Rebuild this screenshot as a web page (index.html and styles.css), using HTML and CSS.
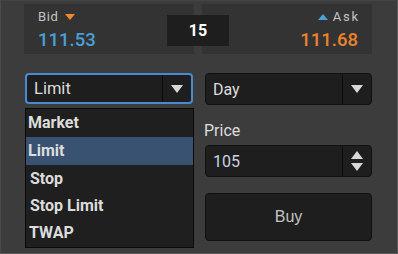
FILE: index.html
```html
<!DOCTYPE html>
<html>
<head>
<meta charset="utf-8">
<link rel="stylesheet" href="styles.css">
</head>
<body>
<div class="panel">
  <div class="quotes">
    <div class="quote bid">
      <div class="label">Bid <span class="tri-down"></span></div>
      <div class="price">111.53</div>
    </div>
    <div class="quote ask">
      <div class="label"><span class="tri-up"></span> Ask</div>
      <div class="price">111.68</div>
    </div>
    <div class="qty">15</div>
  </div>
  <div class="form">
    <div class="col-left">
      <div class="select focused">
        <span class="val">Limit</span>
        <span class="arrow"><span class="caret"></span></span>
      </div>
      <ul class="list">
        <li>Market</li>
        <li class="sel">Limit</li>
        <li>Stop</li>
        <li>Stop Limit</li>
        <li>TWAP</li>
      </ul>
    </div>
    <div class="col-right">
      <div class="select">
        <span class="val">Day</span>
        <span class="arrow"><span class="caret"></span></span>
      </div>
      <div class="plabel">Price</div>
      <div class="select">
        <span class="val num">105</span>
        <span class="arrow spin"><span class="caret-up"></span><span class="caret"></span></span>
      </div>
      <button class="buy">Buy</button>
    </div>
  </div>
</div>
</body>
</html>
```
FILE: styles.css
```css
* { box-sizing: border-box; }
html, body { margin: 0; padding: 0; }
body {
  width: 398px; height: 254px; overflow: hidden;
  background: #3c3c3c;
  font-family: Roboto, "Noto Sans", "Liberation Sans", sans-serif;
}
.panel {
  width: 398px; height: 254px;
  border: 1px solid #5a5a5a;
  border-left-color: #4a4a4a;
  border-top-color: #444;
  padding: 3px 0 0 23px;
}
.quotes {
  position: relative;
  display: flex;
  gap: 8px;
  height: 51px;
}
.quote {
  width: 170px; height: 50px;
  background: #333333;
  padding: 5px 14px 0 14px;
}
.quote .label {
  font-size: 13px; color: #c4c4c4; height: 16px; line-height: 16px;
  display: flex; align-items: center; gap: 7px; letter-spacing: 0.6px;
}
.ask .label { justify-content: flex-end; letter-spacing: 1.8px; gap: 5px; margin-right: -2px; }
.quote .price {
  font-size: 18.5px; line-height: 22px; margin-top: 4px; font-weight: 500;
}
.bid .price { color: #4aa0d8; }
.ask { text-align: right; }
.ask .price { color: #ec832c; }
.tri-down {
  width: 0; height: 0;
  border-left: 5px solid transparent; border-right: 5px solid transparent;
  border-top: 6px solid #f0882c;
}
.tri-up {
  width: 0; height: 0;
  border-left: 5px solid transparent; border-right: 5px solid transparent;
  border-bottom: 6px solid #4aa0d8;
}
.qty {
  position: absolute; left: 143px; top: 11px;
  width: 62px; height: 31px;
  background: #1e1e1e;
  color: #fff; font-weight: 700; font-size: 16px;
  display: flex; align-items: center; justify-content: center;
}
.form {
  display: flex; gap: 12px; margin-top: 18px; padding-left: 1px;
}
.col-left { width: 168px; }
.col-right { width: 167px; display: flex; flex-direction: column; }
.select {
  height: 32px;
  background: #1e1e1e;
  border: 1px solid #111;
  border-radius: 4px;
  display: flex; align-items: stretch;
  color: #dcdcdc; font-size: 16px;
}
.select.focused { border: 2px solid #4a8ad4; height: 31px; border-radius: 4px; }
.select .val { flex: 1; display: flex; align-items: center; padding-left: 7px; }
.select.focused .val { padding-left: 7px; font-size: 16.5px; }
.select .num { color: #c8d4e0; font-size: 16px; }
.select .arrow {
  width: 29px; border-left: 1px solid #0c0c0c;
  display: flex; align-items: center; justify-content: center; flex-direction: column; gap: 4px;
}
.caret {
  width: 0; height: 0;
  border-left: 6px solid transparent; border-right: 6px solid transparent;
  border-top: 8px solid #d8d8d8;
}
.caret-up {
  width: 0; height: 0;
  border-left: 6px solid transparent; border-right: 6px solid transparent;
  border-bottom: 8px solid #d8d8d8;
}
.list {
  list-style: none; margin: 4px 0 0 0; padding: 0;
  width: 169px;
  background: #1f1f1f;
  border: 1px solid #0a0a0a;
  height: 140px;
}
.list li {
  height: 27px; line-height: 27px;
  padding-left: 3px;
  color: #dcdcdc; font-size: 16px; font-weight: 700;
}
.list li:first-child { height: 28px; padding-left: 2px; }
.list li.sel { background: #3a5272; padding-left: 2px; height: 28px; }
.list li:nth-child(3), .list li:nth-child(4) { padding-left: 4px; }
.plabel {
  color: #dcdcdc; font-size: 16px; margin: 15px 0 4px -1px; height: 21px; line-height: 21px;
}
.buy {
  margin-top: 16px;
  height: 48px;
  background: #1e1e1e;
  border: 1px solid #111;
  border-radius: 4px;
  color: #c4c4c4; font-size: 16px;
  font-family: "Liberation Sans", Arial, sans-serif;
}
```
